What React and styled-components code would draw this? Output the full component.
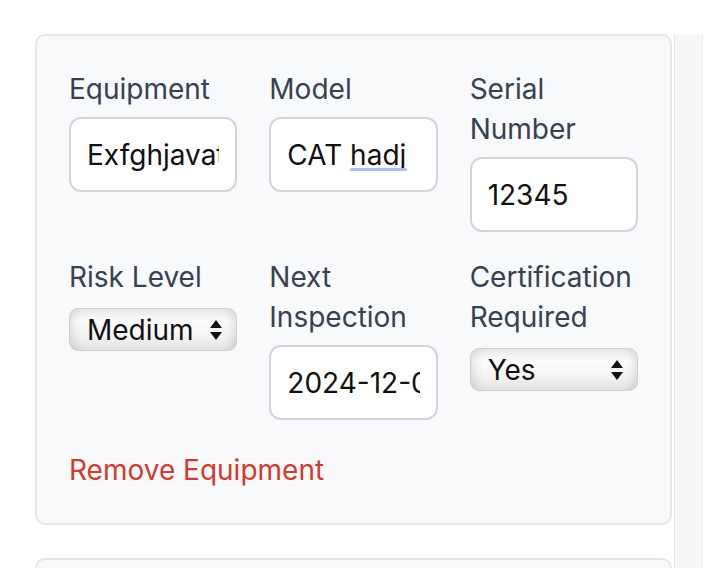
import React from "react";
import styled, { createGlobalStyle } from "styled-components";

const GlobalStyle = createGlobalStyle`
  html, body {
    margin: 0;
    padding: 0;
    background: #ffffff;
    font-family: Inter, "Liberation Sans", sans-serif;
  }
`;

const Page = styled.div`
  display: flex;
  align-items: stretch;
  height: 568px;
  overflow: hidden;
`;

const Main = styled.div`
  width: 637px;
  padding: 34px 2px 0 35px;
  display: flex;
  flex-direction: column;
  gap: 33px;
`;

const SideStrip = styled.div`
  margin-top: 34px;
  width: 27px;
  background: #f7f7f8;
  border-left: 1px solid #e6e6e6;
  border-right: 1px solid #efefef;
`;

const Card = styled.div`
  background: #f8f9fb;
  border: 2px solid #e5e6e8;
  border-radius: 10px;
  padding: 33px 32px 33px;
  min-height: ${(p) => (p.$empty ? "60px" : "auto")};
`;

const Grid = styled.div`
  display: grid;
  grid-template-columns: repeat(3, 1fr);
  column-gap: 32px;
  row-gap: 25px;
  align-items: start;
`;

const Field = styled.div`
  display: flex;
  flex-direction: column;
  min-width: 0;
`;

const Label = styled.label`
  font-size: 28px;
  line-height: 40px;
  font-weight: 400;
  color: #374151;
`;

const InputWrap = styled.div`
  position: relative;
  margin-top: 8px;
`;

const TextInput = styled.input`
  box-sizing: border-box;
  width: 100%;
  height: 75px;
  padding: 0 16px;
  border: 2px solid #d1d5db;
  border-radius: 12px;
  background: #ffffff;
  font-family: Inter, "Liberation Sans", sans-serif;
  font-size: 28px;
  color: #111111;
  outline: none;
`;

const SpellMark = styled.span`
  position: absolute;
  left: ${(p) => p.$left}px;
  width: ${(p) => p.$width}px;
  top: 51px;
  height: 3px;
  border-radius: 2px;
  background: #a9c0ea;
`;

const SelectWrap = styled.div`
  position: relative;
  margin-top: 11px;
  width: 100%;
`;

const Select = styled.select`
  appearance: none;
  -webkit-appearance: none;
  box-sizing: border-box;
  width: 100%;
  height: 43px;
  padding: 0 40px 0 17px;
  border: 1px solid #cfd1d4;
  border-radius: 9px;
  background: linear-gradient(
    to bottom,
    #e9e9e9 0%,
    #fcfcfc 30%,
    #f4f4f4 65%,
    #e2e2e2 100%
  );
  box-shadow: inset 12px 0 10px -8px rgba(0, 0, 0, 0.1),
    inset -12px 0 10px -8px rgba(0, 0, 0, 0.1);
  font-family: Inter, "Liberation Sans", sans-serif;
  font-size: 28px;
  color: #111111;
  outline: none;
`;

const Arrows = styled.svg`
  position: absolute;
  right: 14px;
  top: 50%;
  transform: translateY(-50%);
  pointer-events: none;
`;

const RemoveButton = styled.button`
  align-self: flex-start;
  margin-top: 30px;
  padding: 0;
  border: none;
  background: none;
  font-family: Inter, "Liberation Sans", sans-serif;
  font-size: 28px;
  line-height: 40px;
  color: #d23a2f;
  cursor: pointer;
`;

const CardBody = styled.div`
  display: flex;
  flex-direction: column;
`;

const SelectField = ({ label, value, options }) => (
  <Field>
    <Label>{label}</Label>
    <SelectWrap>
      <Select defaultValue={value}>
        {options.map((o) => (
          <option key={o}>{o}</option>
        ))}
      </Select>
      <Arrows width="14" height="22" viewBox="0 0 14 22">
        <path d="M7 1 L13 9 L1 9 Z" fill="#111" />
        <path d="M1 13 L13 13 L7 21 Z" fill="#111" />
      </Arrows>
    </SelectWrap>
  </Field>
);

const InputField = ({ label, value, mark }) => (
  <Field>
    <Label>{label}</Label>
    <InputWrap>
      <TextInput defaultValue={value} spellCheck={false} />
      {mark && <SpellMark $left={mark.left} $width={mark.width} />}
    </InputWrap>
  </Field>
);

export default function App() {
  return (
    <>
      <GlobalStyle />
      <Page>
        <Main>
          <Card>
            <CardBody>
              <Grid>
                <InputField label="Equipment" value="Exfghjavatar" />
                <InputField
                  label="Model"
                  value="CAT hadj"
                  mark={{ left: 81, width: 57 }}
                />
                <InputField label="Serial Number" value="12345" />
                <SelectField
                  label="Risk Level"
                  value="Medium"
                  options={["Low", "Medium", "High"]}
                />
                <InputField label="Next Inspection" value="2024-12-05" />
                <SelectField
                  label="Certification Required"
                  value="Yes"
                  options={["Yes", "No"]}
                />
              </Grid>
              <RemoveButton type="button">Remove Equipment</RemoveButton>
            </CardBody>
          </Card>
          <Card $empty />
        </Main>
        <SideStrip />
      </Page>
    </>
  );
}
